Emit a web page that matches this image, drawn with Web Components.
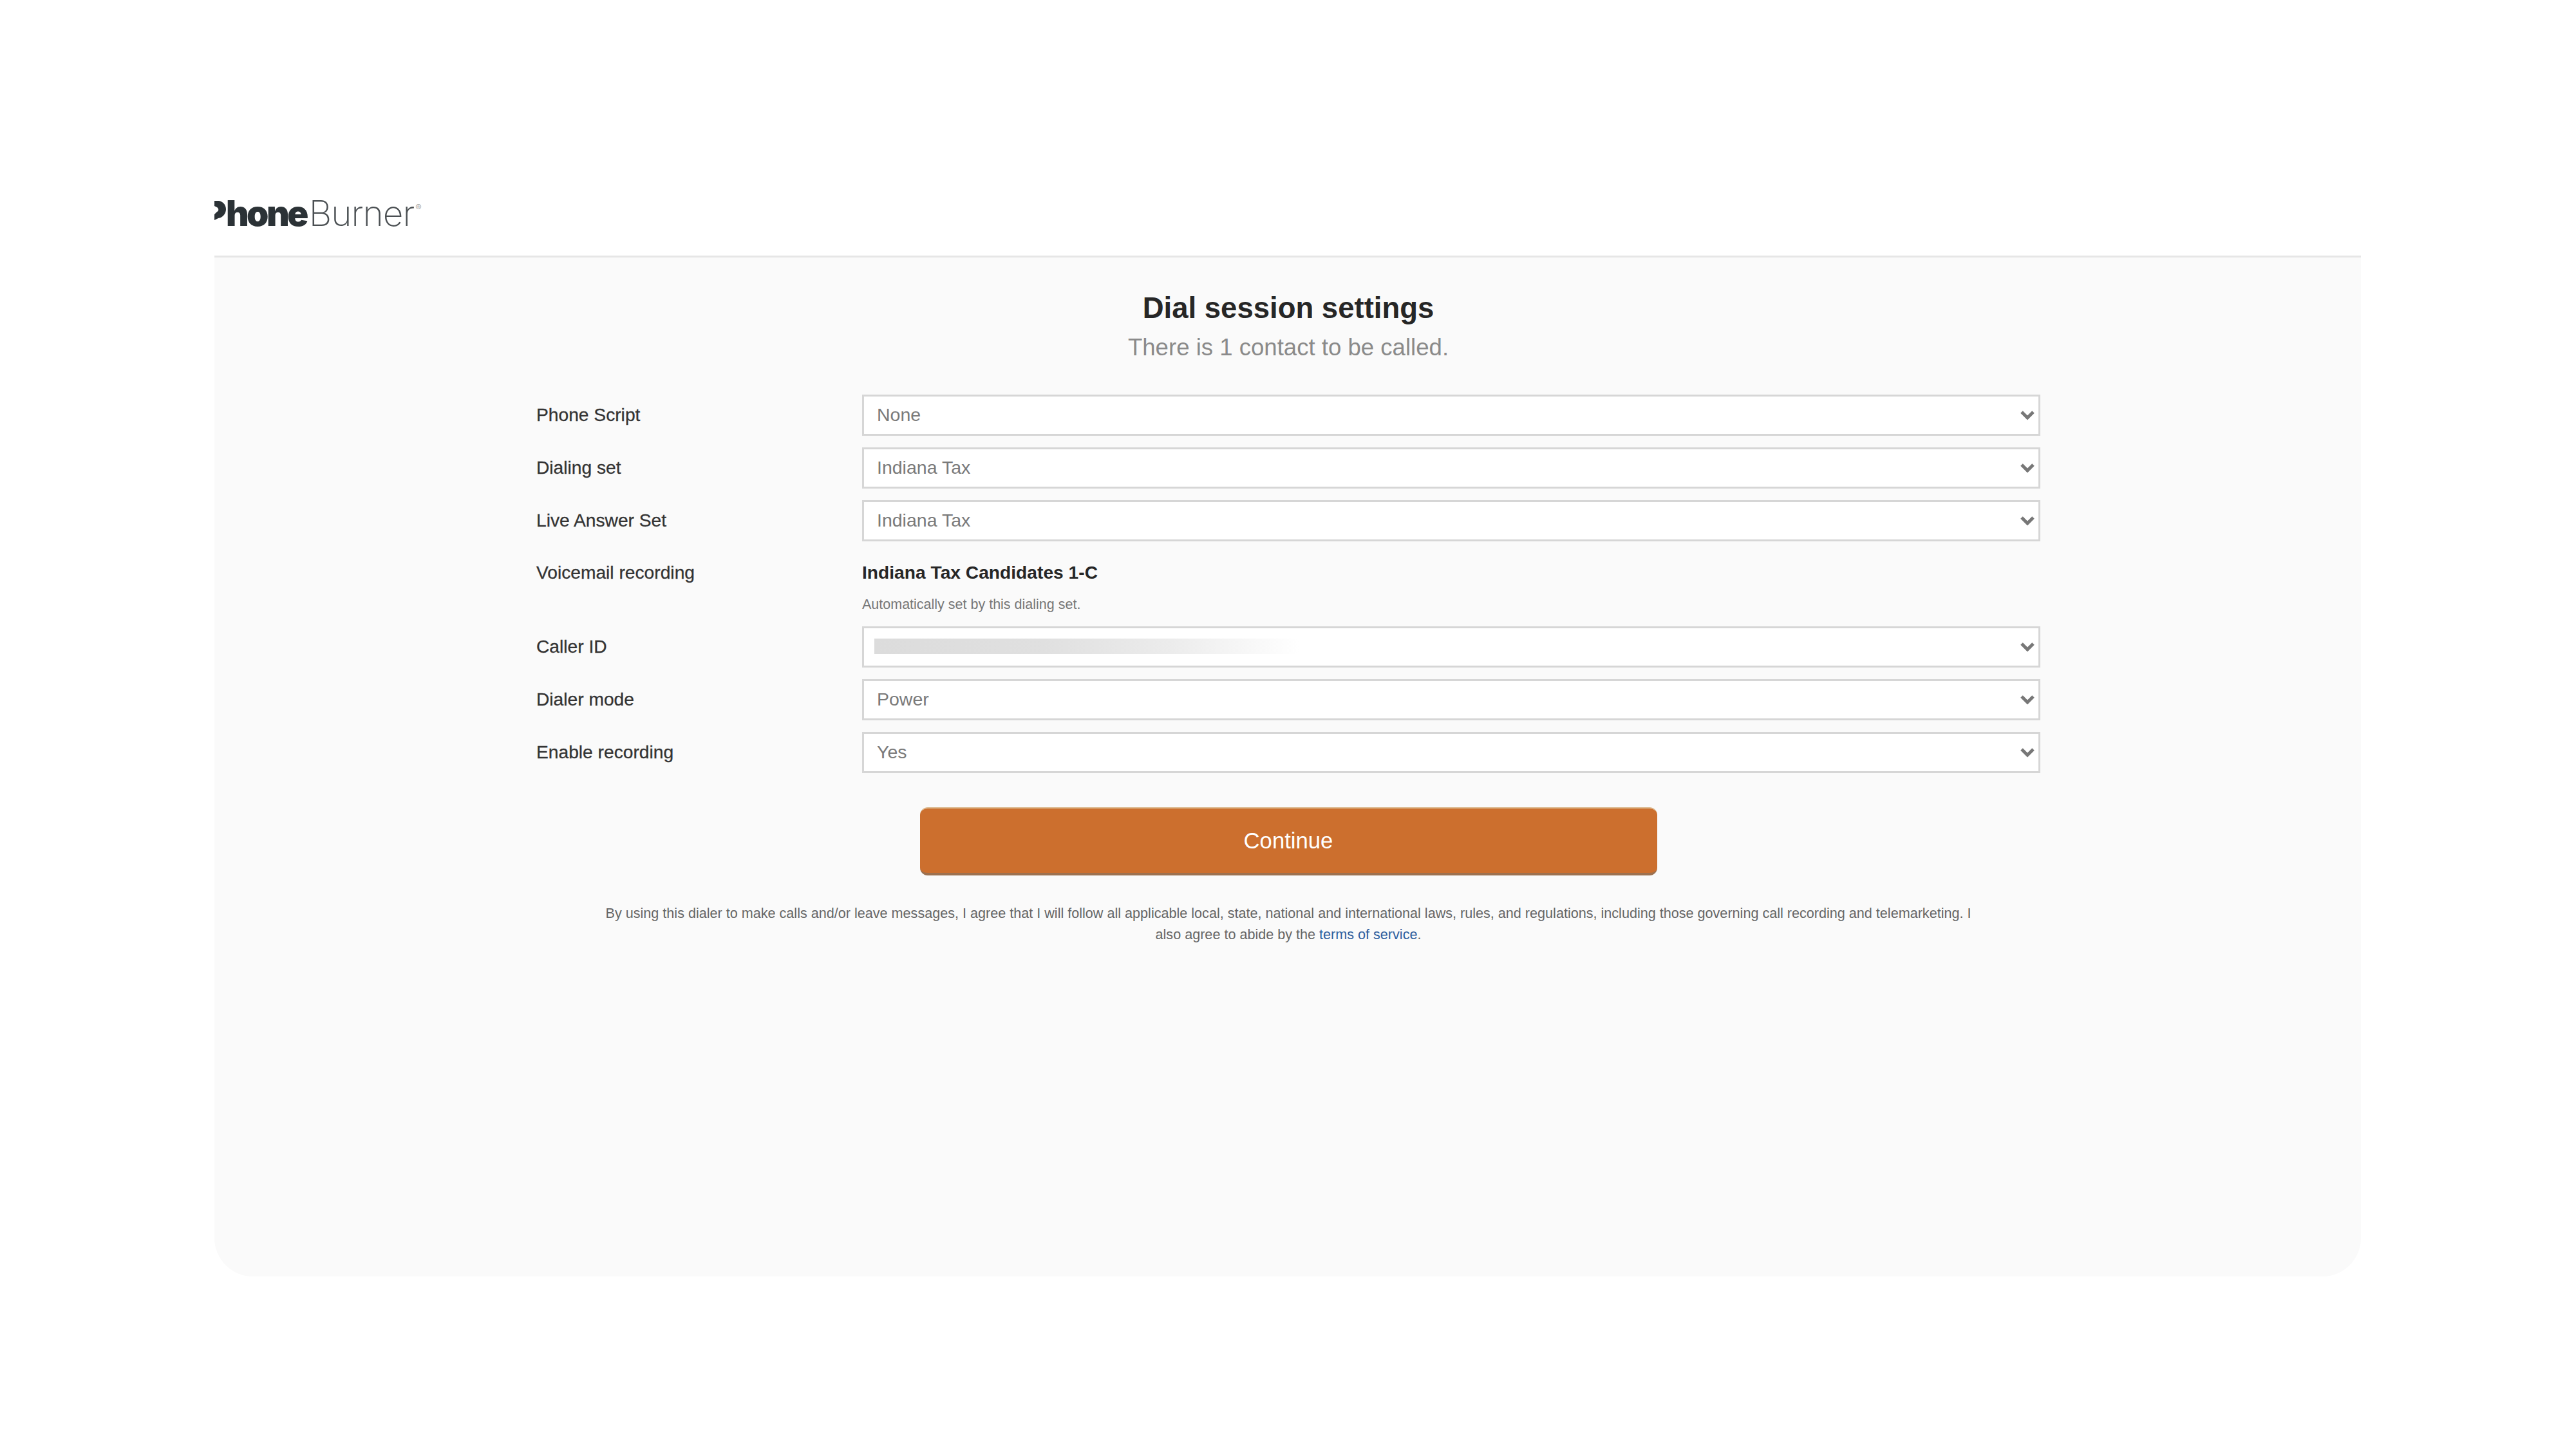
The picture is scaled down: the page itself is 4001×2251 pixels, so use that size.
<!DOCTYPE html>
<html lang="en"><head><meta charset="utf-8"><title>Dial session settings</title>
<style>
html,body{margin:0;padding:0;background:#fff}
body{font-family:"Liberation Sans",Arial,sans-serif}
</style></head><body>
<pb-page>
  <pb-logo slot="header"></pb-logo>
  <pb-heading title-text="Dial session settings">There is 1 contact to be called.</pb-heading>
  <pb-form>
    <pb-select label="Phone Script">None</pb-select>
    <pb-select label="Dialing set">Indiana Tax</pb-select>
    <pb-select label="Live Answer Set">Indiana Tax</pb-select>
    <pb-static label="Voicemail recording" value="Indiana Tax Candidates 1-C">Automatically set by this dialing set.</pb-static>
    <pb-select label="Caller ID" redacted></pb-select>
    <pb-select label="Dialer mode">Power</pb-select>
    <pb-select label="Enable recording">Yes</pb-select>
  </pb-form>
  <pb-button>Continue</pb-button>
  <pb-terms>By using this dialer to make calls and/or leave messages, I agree that I will follow all applicable local, state, national and international laws, rules, and regulations, including those governing call recording and telemarketing. I<br>also agree to abide by the <a href="#" style="color:#2f5f9e;text-decoration:none">terms of service</a>.</pb-terms>
</pb-page>
<script>
function def(name, css, html){
  customElements.define(name, class extends HTMLElement{
    constructor(){super();const r=this.attachShadow({mode:'open'});r.innerHTML='<style>'+css+'</style>'+(typeof html==='function'?html(this):html);}
  });
}
const attr=(el,n)=>(el.getAttribute(n)||'');
def('pb-page',`
:host{display:block;width:4001px;height:2251px;box-sizing:border-box;padding:300px 334px 0 333px;background:#fff;overflow:hidden}
header{height:97px;box-sizing:border-box}
main{height:1586px;box-sizing:border-box;background:#fafafa;border-top:3px solid #e6e6e6;border-radius:0 0 60px 60px;padding:46px 0 0 2px;display:flex;flex-direction:column;align-items:center}
`,`<header><slot name="header"></slot></header><main><slot></slot></main>`);

def('pb-logo',`
:host{display:flex;align-items:baseline;height:62px;font-family:Inter,"Liberation Sans",sans-serif;color:#2b3236;font-size:55px;line-height:62px}
svg{width:18px;height:34px;flex:none;align-self:flex-start;margin-top:12px}
b{font-weight:900;letter-spacing:-3.6px}
span{font-weight:200;color:#4a4f52;margin-left:4px;letter-spacing:-1px}
sup{font-size:14px;line-height:12px;color:#aaa;font-weight:400;align-self:flex-start;margin:17px 0 0 2px}
`,`<svg viewBox="0 0 18 34" aria-hidden="true"><path fill="#2b3236" d="M0 0H7C13 1 18 6 18 13C18 20 13 26 6 27L0 30V21L4 17C7 16 7 12 4 10L0 8Z"/></svg><b>hone</b><span>Burner</span><sup>®</sup>`);

def('pb-heading',`
:host{display:block;text-align:center}
h1{margin:0;font-size:45.5px;line-height:66px;font-weight:700;color:#262626}
p{margin:0;font-size:36.6px;line-height:55px;color:#8a8a8a}
`,el=>`<h1>${attr(el,'title-text')}</h1><p><slot></slot></p>`);

def('pb-form',`
:host{display:flex;flex-direction:column;gap:18px;width:2336px;margin-top:46px}
`,`<slot></slot>`);

const rowCss=`
:host{display:grid;grid-template-columns:506px 1830px;font-size:28.2px;color:#333}
.l{line-height:62px;-webkit-text-stroke:.3px #333}
`;
def('pb-select',rowCss+`
.box{position:relative;height:64px;box-sizing:border-box;border:3px solid #d6d6d6;background:#fff;padding-left:20px;line-height:56px;color:#7a7a7a;font-size:28.5px}
svg{position:absolute;right:5px;top:19px;width:24px;height:20px}
.blur{position:absolute;left:16px;top:16px;width:660px;height:24px;background:linear-gradient(90deg,#dcdcdc 0,#e0e0e0 40%,#ececec 70%,#fff 100%)}
`,el=>`<div class="l">${attr(el,'label')}</div><div class="box">${el.hasAttribute('redacted')?'<div class="blur"></div>':'<slot></slot>'}<svg viewBox="0 0 24 20" aria-hidden="true"><path d="M3 5L12 14L21 5" fill="none" stroke="#777" stroke-width="5"/></svg></div>`);

def('pb-static',rowCss+`
.v{font-weight:700;color:#262626;line-height:60px}
small{display:block;font-size:21.5px;line-height:34px;color:#777;margin-top:3px}
:host{height:96px}
.l{line-height:60px}
`,el=>`<div class="l">${attr(el,'label')}</div><div><div class="v">${attr(el,'value')}</div><small><slot></slot></small></div>`);

def('pb-button',`
:host{display:block;margin-top:53px}
button{display:block;width:1145px;height:106px;border:0;border-top:2px solid #dcb98f;border-bottom:4px solid #9c7150;border-radius:12px;background:#cc6f2e;color:#fff;font:34.7px "Liberation Sans",Arial,sans-serif;padding:0}
`,`<button type="button"><slot></slot></button>`);

def('pb-terms',`
:host{display:block;margin-top:42px;width:2200px;text-align:center;font-size:21.6px;line-height:33px;color:#666}
`,`<slot></slot>`);
</script>
</body></html>
